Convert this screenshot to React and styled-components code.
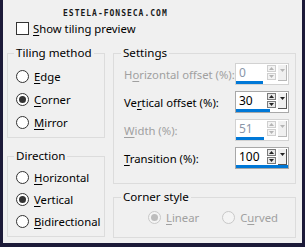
import styled, { createGlobalStyle } from 'styled-components';

const Global = createGlobalStyle`
  body { margin:0; background:#f0f0f0; }
`;

const Frame = styled.div`
  width:305px;
  height:247px;
  box-sizing:border-box;
  background:#f0f0f0;
  border:3px solid #1c1a38;
  border-top:none;
  border-bottom-width:4px;
  padding:9px 6px 0 4px;
  font-family:"Noto Sans", "Open Sans", sans-serif;
  font-size:11.3px;
  color:#000;
  white-space:nowrap;
`;

const Watermark = styled.div`
  margin-left:56px;
  height:10px;
  line-height:10px;
  font-family:"DejaVu Sans Mono", monospace;
  font-weight:bold;
  font-size:8px;
  letter-spacing:1px;
  color:#1a1a1a;
`;

const CheckRow = styled.label`
  display:flex;
  align-items:center;
  gap:4px;
  height:16px;
  margin:1px 0 0 9px;
`;

const Box = styled.span`
  width:13px;
  height:13px;
  box-sizing:border-box;
  border:1px solid #333;
  background:#fff;
  flex:none;
`;

const Columns = styled.div`
  display:flex;
  gap:8px;
  margin-top:9px;
`;

const Column = styled.div`
  display:flex;
  flex-direction:column;
  width:${p => p.w}px;
  gap:${p => p.gap}px;
`;

const Group = styled.fieldset`
  margin:0;
  padding:0;
  min-width:0;
  border:1px solid #dcdcdc;
`;

const Legend = styled.legend`
  margin-left:${p => p.indent}px;
  padding:0 2px;
  height:16px;
  line-height:16px;
  font-size:11.6px;
`;

const Body = styled.div`
  display:flex;
  flex-direction:${p => (p.row ? 'row' : 'column')};
  gap:${p => p.gap || 0}px;
  padding:${p => p.pad};
`;

const RadioRow = styled.label`
  display:flex;
  align-items:center;
  gap:5px;
  height:${p => p.h}px;
  color:${p => (p.disabled ? '#a0a0a0' : '#000')};
`;

const Circle = styled.span`
  width:13px;
  height:13px;
  box-sizing:border-box;
  border-radius:50%;
  border:1px solid ${p => (p.disabled ? '#c8c8c8' : '#333')};
  background:${p => (p.disabled ? '#f4f4f4' : '#fff')};
  display:flex;
  align-items:center;
  justify-content:center;
  flex:none;
  &::after {
    content:'';
    width:7px;
    height:7px;
    border-radius:50%;
    background:${p => (p.disabled ? '#bdbdbd' : '#333')};
    display:${p => (p.checked ? 'block' : 'none')};
  }
`;

const Key = styled.span`
  text-decoration:underline;
  text-underline-offset:2px;
`;

const FieldRow = styled.div`
  display:flex;
  align-items:center;
  justify-content:space-between;
  height:22px;
  color:${p => (p.disabled ? '#a0a0a0' : '#000')};
`;

const Spin = styled.div`
  width:54px;
  height:22px;
  box-sizing:border-box;
  border:1px solid ${p => (p.disabled ? '#d2d2d2' : '#a8a8a8')};
  background:#fff;
  display:flex;
  flex-direction:column;
  flex:none;
`;

const SpinTop = styled.div`
  display:flex;
  align-items:center;
  height:17px;
  padding-right:1px;
`;

const Value = styled.span`
  flex:1;
  padding-left:3px;
  line-height:17px;
  font-size:12px;
  color:${p => (p.disabled ? '#8a96a8' : '#000')};
`;

const Arrows = styled.div`
  display:flex;
  flex-direction:column;
  gap:1px;
  margin-right:2px;
`;

const ArrowBtn = styled.span`
  width:9px;
  height:7px;
  box-sizing:border-box;
  border:1px solid ${p => (p.disabled ? '#cfcfcf' : '#7a7a7a')};
  background:${p => (p.disabled ? '#f3f3f3' : '#e8e8e8')};
  display:flex;
  align-items:center;
  justify-content:center;
`;

const Drop = styled.span`
  width:9px;
  height:16px;
  box-sizing:border-box;
  background:#f0f0f0;
  border-right:1px solid ${p => (p.disabled ? '#b8b8b8' : '#555')};
  border-bottom:1px solid ${p => (p.disabled ? '#b8b8b8' : '#555')};
  display:flex;
  align-items:flex-start;
  justify-content:center;
  padding-top:4px;
`;

const Bar = styled.div`
  height:3px;
  margin-top:auto;
  background:#0078d7;
`;

const Tri = ({ up, color }) => (
  <svg width="5" height="3" viewBox="0 0 5 3">
    <path d={up ? 'M0 3 L2.5 0 L5 3 Z' : 'M0 0 L5 0 L2.5 3 Z'} fill={color} />
  </svg>
);

const Radio = ({ h, checked, disabled, label, k }) => {
  const i = label.indexOf(k);
  return (
    <RadioRow h={h} disabled={disabled}>
      <Circle checked={checked} disabled={disabled} />
      <span>
        {label.slice(0, i)}
        <Key>{k}</Key>
        {label.slice(i + 1)}
      </span>
    </RadioRow>
  );
};

const SpinBox = ({ value, disabled, fill }) => {
  const c = disabled ? '#b5b5b5' : '#222';
  return (
    <Spin disabled={disabled}>
      <SpinTop>
        <Value disabled={disabled}>{value}</Value>
        <Arrows>
          <ArrowBtn disabled={disabled}><Tri up color={c} /></ArrowBtn>
          <ArrowBtn disabled={disabled}><Tri color={c} /></ArrowBtn>
        </Arrows>
        <Drop disabled={disabled}><Tri color={c} /></Drop>
      </SpinTop>
      <Bar style={{ width: fill }} />
    </Spin>
  );
};

const fields = [
  { pre: 'H', k: 'o', post: 'rizontal offset (%):', value: '0', disabled: true, fill: 27 },
  { pre: 'Ve', k: 'r', post: 'tical offset (%):', value: '30', fill: 34 },
  { pre: '', k: 'W', post: 'idth (%):', value: '51', disabled: true, fill: 28 },
  { pre: '', k: 'T', post: 'ransition (%):', value: '100', fill: 52 },
];

export default function App() {
  return (
    <Frame>
      <Global />
      <Watermark>ESTELA-FONSECA.COM</Watermark>
      <CheckRow>
        <Box />
        <span><Key>S</Key>how tiling preview</span>
      </CheckRow>
      <Columns>
        <Column w={98} gap={10}>
          <Group>
            <Legend indent={6}>Tiling method</Legend>
            <Body pad="4px 0 3px 8px">
              <Radio h={23} label="Edge" k="E" />
              <Radio h={23} label="Corner" k="C" checked />
              <Radio h={23} label="Mirror" k="M" />
            </Body>
          </Group>
          <Group>
            <Legend indent={6}>Direction</Legend>
            <Body pad="2px 0 4px 8px">
              <Radio h={22} label="Horizontal" k="H" />
              <Radio h={22} label="Vertical" k="V" checked />
              <Radio h={22} label="Bidirectional" k="B" />
            </Body>
          </Group>
        </Column>
        <Column w={183} gap={5}>
          <Group>
            <Legend indent={7}>Settings</Legend>
            <Body gap={6} pad="2px 6px 14px 10px">
              {fields.map(f => (
                <FieldRow key={f.post} disabled={f.disabled}>
                  <span>{f.pre}<Key>{f.k}</Key>{f.post}</span>
                  <SpinBox value={f.value} disabled={f.disabled} fill={f.fill} />
                </FieldRow>
              ))}
            </Body>
          </Group>
          <Group>
            <Legend indent={7}>Corner style</Legend>
            <Body row gap={23} pad="4px 0 12px 34px">
              <Radio h={16} label="Linear" k="L" checked disabled />
              <Radio h={16} label="Curved" k="u" disabled />
            </Body>
          </Group>
        </Column>
      </Columns>
    </Frame>
  );
}
